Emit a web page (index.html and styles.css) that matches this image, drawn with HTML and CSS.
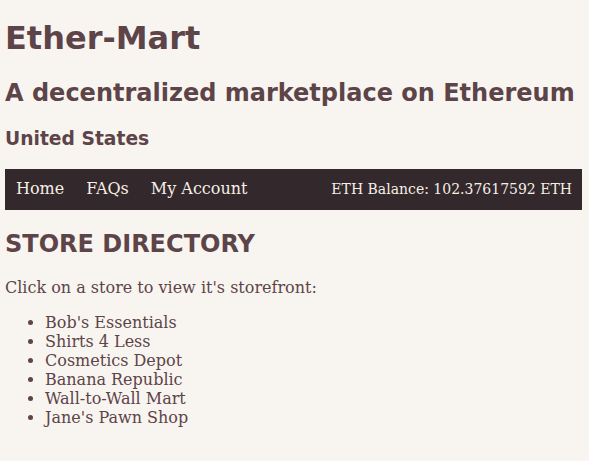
FILE: index.html
```html
<!DOCTYPE html>
<html>
<head>
<meta charset="utf-8">
<link rel="stylesheet" href="styles.css">
</head>
<body>
<div class="page">
  <h1 class="title">Ether-Mart</h1>
  <h2 class="subtitle">A decentralized marketplace on Ethereum</h2>
  <h3 class="region">United States</h3>
  <nav class="nav">
    <div class="nav-links">
      <a class="nav-link">Home</a>
      <a class="nav-link">FAQs</a>
      <a class="nav-link">My Account</a>
    </div>
    <div class="balance">ETH Balance: 102.37617592 ETH</div>
  </nav>
  <h2 class="section-title">STORE DIRECTORY</h2>
  <p class="intro">Click on a store to view it's storefront:</p>
  <ul class="stores">
    <li>Bob's Essentials</li>
    <li>Shirts 4 Less</li>
    <li>Cosmetics Depot</li>
    <li>Banana Republic</li>
    <li>Wall-to-Wall Mart</li>
    <li>Jane's Pawn Shop</li>
  </ul>
</div>
</body>
</html>
```

FILE: styles.css
```css
html, body {
  margin: 0;
  padding: 0;
  background: #f8f5f0;
}
body {
  font-family: "DejaVu Serif", serif;
  font-size: 16px;
  color: #5d4449;
}
.page {
  padding: 0 7px 0 5px;
}
.title, .subtitle, .region, .section-title {
  font-family: "DejaVu Sans", sans-serif;
  font-weight: bold;
  color: #5d4449;
}
.title {
  font-size: 32px;
  margin: 0;
  padding-top: 19px;
}
.subtitle {
  font-size: 24px;
  margin: 0;
  padding-top: 22px;
}
.region {
  font-size: 18.72px;
  margin: 0;
  padding-top: 21px;
}
.nav {
  box-sizing: border-box;
  margin-top: 20px;
  background: #33282b;
  height: 41px;
  display: flex;
  align-items: center;
  justify-content: space-between;
  padding: 0 10px 2px 11px;
  color: #f5efe6;
}
.nav-links {
  display: flex;
  gap: 22px;
}
.nav-link {
  color: #f5efe6;
  font-size: 16px;
}
.balance {
  font-size: 14px;
}
.section-title {
  font-size: 24px;
  margin: 0;
  padding-top: 20px;
}
.intro {
  margin: 0;
  padding-top: 20px;
}
.stores {
  margin: 16px 0 0 0;
  padding-left: 40px;
}
```
